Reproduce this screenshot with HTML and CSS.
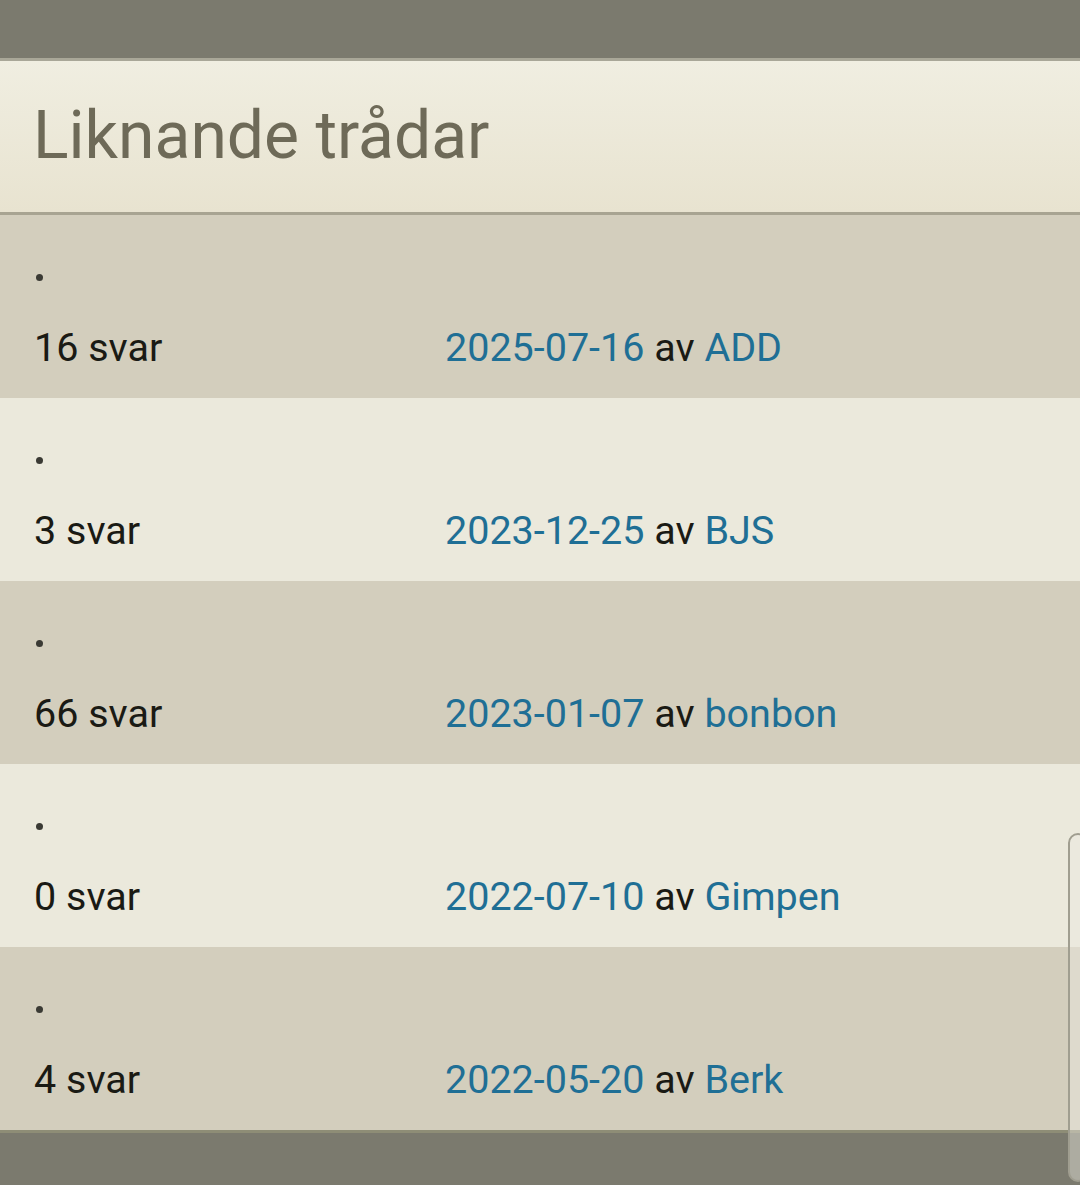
FILE: index.html
```html
<!DOCTYPE html>
<html lang="sv">
	<head>
		<meta charset="UTF-8" />
		<meta name="viewport" content="width=device-width, initial-scale=1.0" />
		<title>Liknande trådar</title>
		<link rel="stylesheet" href="styles.css">
	</head>
	<body>
		<div class="topbar"></div>

		<div class="similar">
			<h2 class="similar-head">Liknande trådar</h2>

			<ul class="threads">
				<li class="thread">
					<div class="title"><span class="dot"></span></div>
					<div class="meta">
						<span>16 svar</span>
						<span><a href="#">2025-07-16</a> av <a href="#">ADD</a></span>
					</div>
				</li>
				<li class="thread">
					<div class="title"><span class="dot"></span></div>
					<div class="meta">
						<span>3 svar</span>
						<span><a href="#">2023-12-25</a> av <a href="#">BJS</a></span>
					</div>
				</li>
				<li class="thread">
					<div class="title"><span class="dot"></span></div>
					<div class="meta">
						<span>66 svar</span>
						<span><a href="#">2023-01-07</a> av <a href="#">bonbon</a></span>
					</div>
				</li>
				<li class="thread">
					<div class="title"><span class="dot"></span></div>
					<div class="meta">
						<span>0 svar</span>
						<span><a href="#">2022-07-10</a> av <a href="#">Gimpen</a></span>
					</div>
				</li>
				<li class="thread">
					<div class="title"><span class="dot"></span></div>
					<div class="meta">
						<span>4 svar</span>
						<span><a href="#">2022-05-20</a> av <a href="#">Berk</a></span>
					</div>
				</li>
			</ul>
		</div>

		<div class="footer"></div>

		<div class="scroll-thumb"></div>
	</body>
</html>
```

FILE: styles.css
```css
html,
body {
	height: 100%;
}
body {
	margin: 0;
	font-family: Roboto, "Liberation Sans", Arial, sans-serif;
	background-color: #7b7a6e;
	display: flex;
	flex-direction: column;
	overflow: hidden;
}
.topbar {
	height: 58px;
	background-color: #7b7a6e;
	border-bottom: 3px solid #a9a798;
	flex-shrink: 0;
}
.similar-head {
	margin: 0;
	padding: 35px 33px 37px;
	font-size: 66px;
	font-weight: normal;
	line-height: 1.2;
	color: #6e6a58;
	background: linear-gradient(#f0eee1, #e8e3d0);
	border-bottom: 3px solid #a8a492;
}
.threads {
	list-style: none;
	margin: 0;
	padding: 0;
}
.thread {
	padding: 24px 34px 26px;
	background-color: #d3cebd;
}
.thread:nth-child(even) {
	background-color: #ebe9dc;
}
.title {
	height: 76px;
	display: flex;
	align-items: center;
}
.dot {
	width: 7px;
	height: 7px;
	margin-left: 2px;
	border-radius: 50%;
	background-color: #3a3a34;
}
.meta {
	margin-top: 9px;
	display: grid;
	grid-template-columns: 411px auto;
	font-size: 39.5px;
	line-height: 48px;
	color: #1a1a14;
}
.meta a {
	color: #1f6f95;
	text-decoration: none;
}
.footer {
	flex: 1;
	background-color: #7b7a6e;
	border-top: 3px solid #8e8d76;
}
.scroll-thumb {
	position: absolute;
	top: 833px;
	right: -8px;
	width: 16px;
	height: 345px;
	border: 2px solid #a09e90;
	border-radius: 10px;
	background-color: rgba(235, 233, 224, 0.45);
}
```
